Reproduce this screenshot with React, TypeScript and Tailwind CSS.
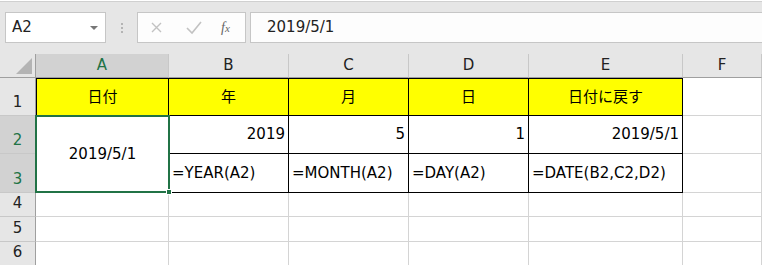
import React from 'react';

const font = "font-['DejaVu_Sans','Noto_Sans_CJK_JP',sans-serif]";

const cols = ['A', 'B', 'C', 'D', 'E', 'F'];

const ColHeader = ({ label, active }: { label: string; active?: boolean }) => (
  <div
    className={`flex items-center justify-center border-r border-b border-r-[#c8c8c8] border-b-[#9f9f9f] text-[15px] ${
      active ? 'bg-[#d2d2d2] text-[#217346]' : 'bg-[#e6e6e6] text-[#222]'
    }`}
  >
    {label}
  </div>
);

const RowHeader = ({ n, active }: { n: number; active?: boolean }) => (
  <div
    className={`flex items-end justify-center pb-[3px] border-r border-b border-r-[#9f9f9f] border-b-[#c8c8c8] text-[15px] leading-[20px] ${
      active ? 'bg-[#d2d2d2] text-[#217346]' : 'bg-[#e6e6e6] text-[#222]'
    }`}
  >
    {n}
  </div>
);

const Cell = ({
  children,
  align = 'left',
  boxed,
  yellow,
  className = '',
}: {
  children?: React.ReactNode;
  align?: 'left' | 'right' | 'center';
  boxed?: boolean;
  yellow?: boolean;
  className?: string;
}) => {
  const justify = align === 'right' ? 'justify-end pr-[3px]' : align === 'center' ? 'justify-center' : 'justify-start pl-[3px]';
  return (
    <div
      className={`flex items-center text-[15px] text-black whitespace-nowrap ${justify} ${
        boxed ? 'border-r border-b border-black' : 'border-r border-b border-[#d4d4d4]'
      } ${yellow ? 'bg-[#ffff00]' : 'bg-white'} ${className}`}
    >
      {children}
    </div>
  );
};

export default function App() {
  return (
    <div className={`w-[762px] h-[265px] overflow-hidden bg-white ${font}`}>
      {/* formula bar */}
      <div className="h-[53px] bg-[#e6e6e6] border-t border-t-[#d0d0d0] mt-px flex items-start pt-[10px] pl-[5px]">
        <div className="w-[101px] h-[31px] bg-white border border-[#c6c6c6] flex items-center justify-between pl-[6px] pr-[7px]">
          <span className="text-[15px] text-[#222]">A2</span>
          <span className="w-0 h-0 border-l-[4px] border-r-[4px] border-t-[4px] border-l-transparent border-r-transparent border-t-[#777]" />
        </div>
        <div className="w-[31px] h-[31px] flex flex-col items-center justify-center gap-[2px]">
          <span className="w-[2px] h-[2px] bg-[#b4b4b4]" />
          <span className="w-[2px] h-[2px] bg-[#b4b4b4]" />
          <span className="w-[2px] h-[2px] bg-[#b4b4b4]" />
        </div>
        <div className="w-[109px] h-[31px] bg-[#fdfdfd] border border-[#c6c6c6] flex items-center">
          <svg width="38" height="31" viewBox="0 0 38 31" className="shrink-0">
            <path d="M14 11 L23 20 M23 11 L14 20" stroke="#c2c2c2" strokeWidth="1.4" fill="none" />
          </svg>
          <svg width="38" height="31" viewBox="0 0 38 31" className="shrink-0">
            <path d="M11 16 L16 21 L25 10" stroke="#c2c2c2" strokeWidth="1.6" fill="none" />
          </svg>
          <span className="font-['Liberation_Serif',serif] italic text-[14px] text-[#666] ml-[7px]">
            f<span className="text-[11px]">x</span>
          </span>
        </div>
        <div className="ml-[4px] flex-1 h-[31px] bg-[#fdfdfd] border border-[#c6c6c6] border-r-0 flex items-center pl-[16px]">
          <span className="text-[15px] text-[#222]">2019/5/1</span>
        </div>
      </div>

      {/* sheet */}
      <div className="grid grid-cols-[36px_133px_120px_120px_120px_154px_1fr] grid-rows-[24px_38px_38px_39px_24px_25px_24px] relative">
        <div className="bg-[#e6e6e6] border-r border-b border-r-[#9f9f9f] border-b-[#9f9f9f] relative">
          <svg width="16" height="16" className="absolute right-[3px] bottom-[3px]" viewBox="0 0 16 16">
            <path d="M16 0 L16 16 L0 16 Z" fill="#b4b4b4" />
          </svg>
        </div>
        {cols.map((c) => (
          <ColHeader key={c} label={c} active={c === 'A'} />
        ))}

        {/* row 1 */}
        <RowHeader n={1} />
        <Cell align="center" boxed yellow className="border-l border-t">日付</Cell>
        <Cell align="center" boxed yellow className="border-t">年</Cell>
        <Cell align="center" boxed yellow className="border-t">月</Cell>
        <Cell align="center" boxed yellow className="border-t">日</Cell>
        <Cell align="center" boxed yellow className="border-t">日付に戻す</Cell>
        <Cell />

        {/* row 2 */}
        <RowHeader n={2} active />
        <Cell align="center" boxed className="row-span-2 border-l">2019/5/1</Cell>
        <Cell align="right" boxed>2019</Cell>
        <Cell align="right" boxed>5</Cell>
        <Cell align="right" boxed>1</Cell>
        <Cell align="right" boxed>2019/5/1</Cell>
        <Cell />

        {/* row 3 */}
        <RowHeader n={3} active />
        <Cell boxed>=YEAR(A2)</Cell>
        <Cell boxed>=MONTH(A2)</Cell>
        <Cell boxed>=DAY(A2)</Cell>
        <Cell boxed>=DATE(B2,C2,D2)</Cell>
        <Cell />

        {[4, 5, 6].map((n) => (
          <React.Fragment key={n}>
            <RowHeader n={n} />
            {cols.map((c) => (
              <Cell key={c} />
            ))}
          </React.Fragment>
        ))}

        {/* selection */}
        <div className="absolute left-[35px] top-[61px] w-[135px] h-[78px] border-2 border-[#217346] pointer-events-none">
          <span className="absolute -right-[4px] -bottom-[4px] w-[6px] h-[6px] bg-[#217346] border border-white" />
        </div>
      </div>
    </div>
  );
}
